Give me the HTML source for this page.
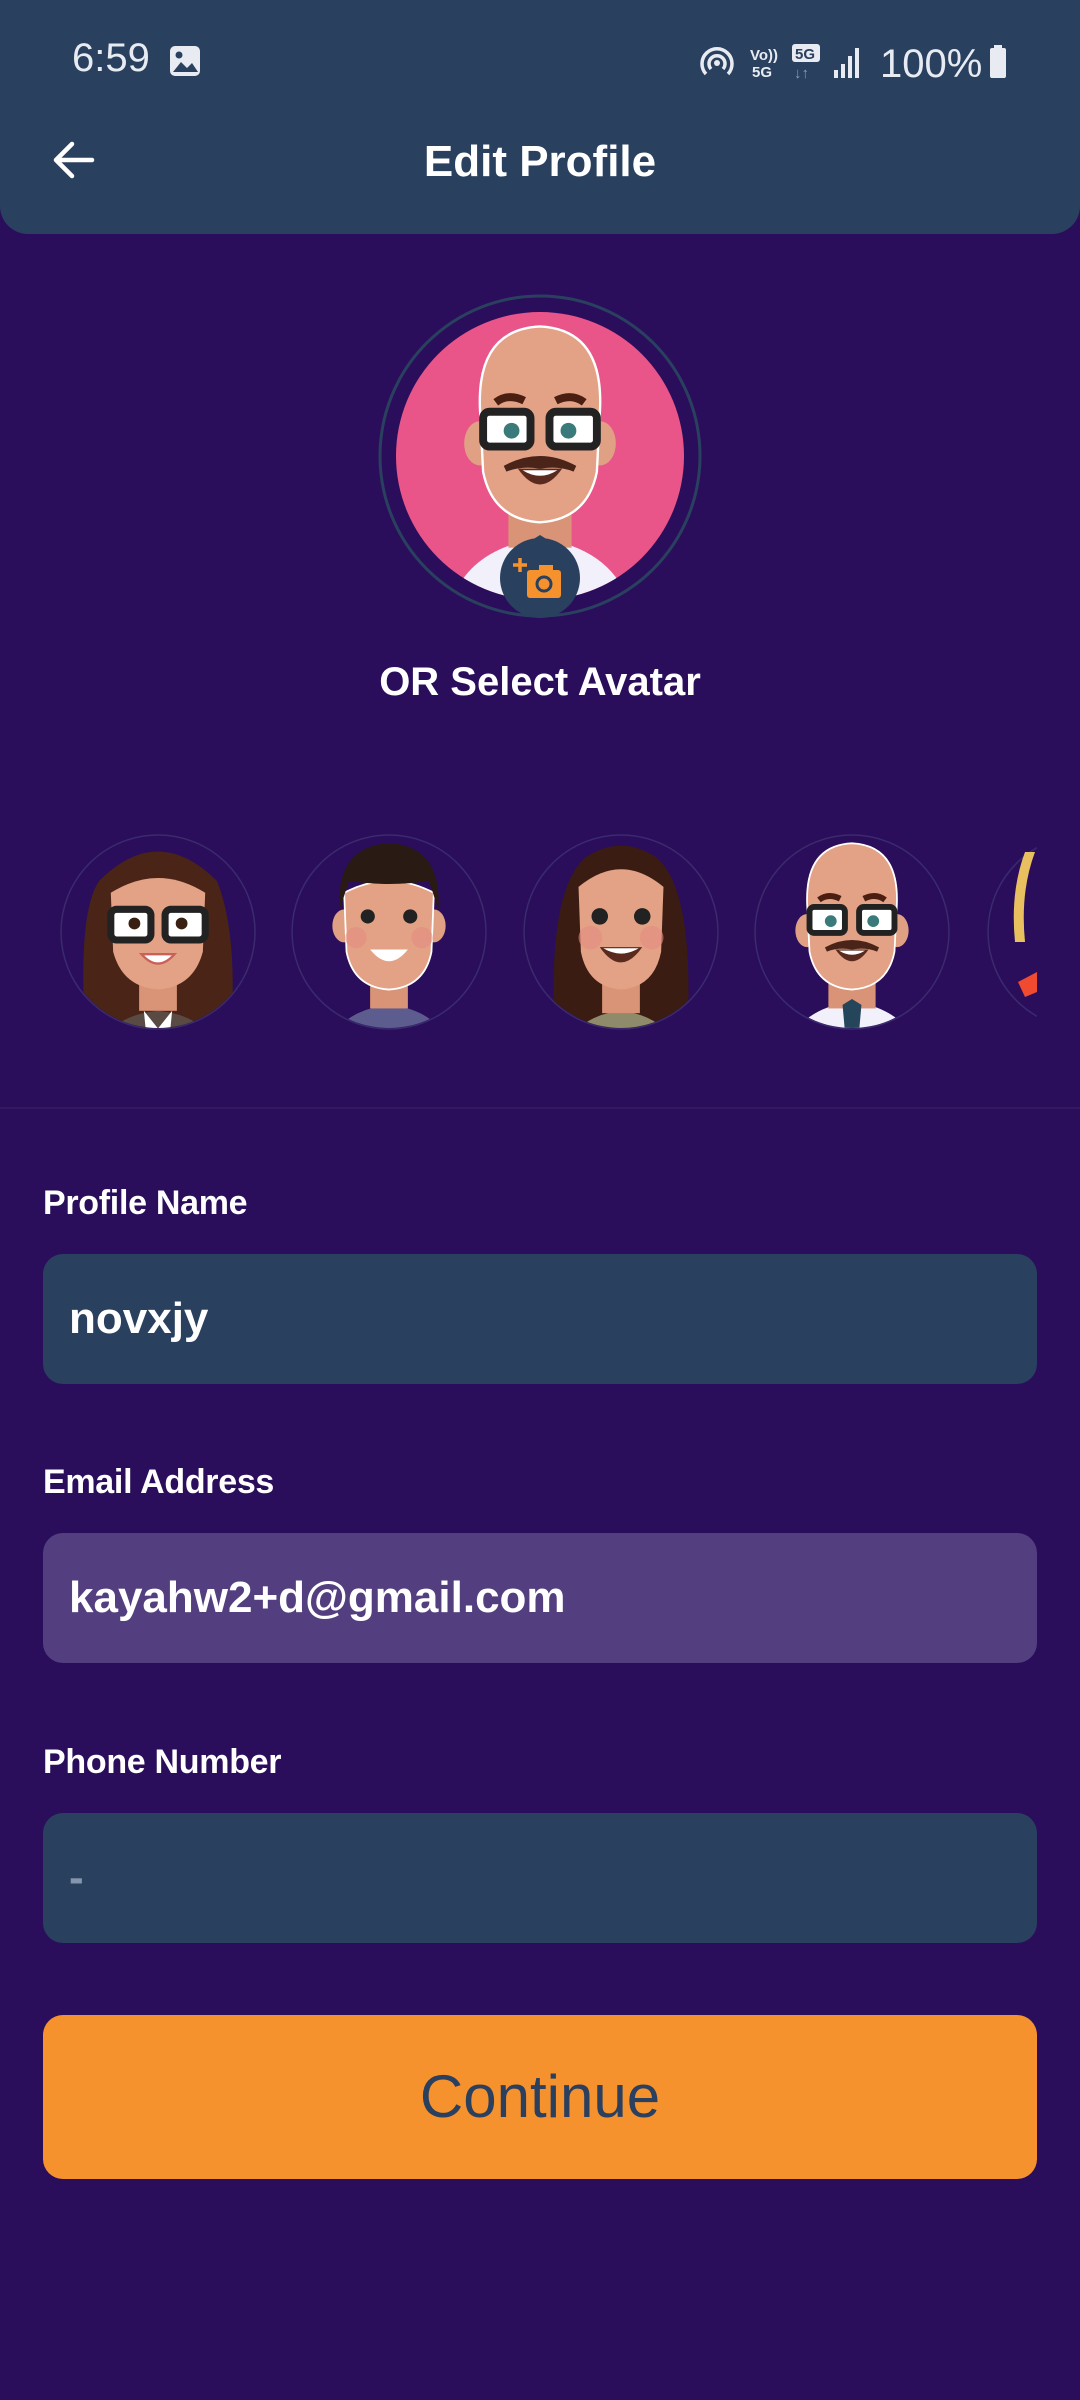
<!DOCTYPE html>
<html><head><meta charset="utf-8"><style>
*{margin:0;padding:0;box-sizing:border-box}
body{width:1080px;height:2400px;background:#2a0e5b;position:relative;overflow:hidden;font-family:"Liberation Sans",sans-serif;color:#fff}
.hdr{position:absolute;left:0;top:0;width:1080px;height:234px;background:#2a405f;border-radius:0 0 28px 28px}
.abs{position:absolute}
.lbl{position:absolute;left:43px;font-size:34px;font-weight:bold;letter-spacing:-0.3px}
.inp{position:absolute;left:43px;width:994px;height:130px;border-radius:20px;background:#29405f;font-size:44px;font-weight:bold;padding-left:26px;line-height:130px}
</style></head><body>
<div class="hdr"></div>
<div class="abs" style="left:72px;top:36px;font-size:40px;color:#e8ecf2">6:59</div>
<svg class="abs" style="left:168px;top:44px" width="34" height="34" viewBox="0 0 34 34"><rect x="2" y="2" width="30" height="30" rx="5" fill="#e8ecf2"/><circle cx="11" cy="11" r="3.5" fill="#2a405f"/><path d="M5 28 L13 18 L19 24 L24 19 L30 28Z" fill="#2a405f"/></svg>
<svg class="abs" style="left:698px;top:42px" width="310" height="40" viewBox="0 0 310 40">
<g fill="none" stroke="#e8ecf2" stroke-width="3.5"><path d="M8 32 A15 15 0 1 1 30 32"/><path d="M13 27 A8 8 0 1 1 25 27"/></g><circle cx="19" cy="21" r="3" fill="#e8ecf2"/>
<text x="52" y="18" font-size="15" font-weight="bold" fill="#e8ecf2" font-family="Liberation Sans">Vo))</text><text x="54" y="35" font-size="15" font-weight="bold" fill="#e8ecf2" font-family="Liberation Sans">5G</text>
<rect x="94" y="2" width="28" height="18" rx="3" fill="#e8ecf2"/><text x="97" y="17" font-size="15" font-weight="bold" fill="#2a405f" font-family="Liberation Sans">5G</text><text x="96" y="36" font-size="15" fill="#8a9ab0" font-family="Liberation Sans">↓↑</text>
<g fill="#e8ecf2"><rect x="136" y="28" width="4" height="8"/><rect x="143" y="22" width="4" height="14"/><rect x="150" y="14" width="4" height="22"/><rect x="157" y="6" width="4" height="30"/></g>
<text x="182" y="35" font-size="40" fill="#e8ecf2" font-family="Liberation Sans">100%</text>
<rect x="292" y="6" width="16" height="30" rx="2" fill="#e8ecf2"/><rect x="296" y="3" width="8" height="4" fill="#e8ecf2"/>
</svg>
<svg class="abs" style="left:50px;top:138px" width="48" height="44" viewBox="0 0 48 44"><path d="M42 22 H6 M22 6 L6 22 L22 38" fill="none" stroke="#fff" stroke-width="4.5" stroke-linecap="round" stroke-linejoin="round"/></svg>
<div class="abs" style="left:0;width:1080px;top:137px;text-align:center;font-size:44px;font-weight:bold">Edit Profile</div>

<svg width="0" height="0" style="position:absolute"><defs>
<g id="bald">
<path d="M40 210 Q45 160 100 152 Q155 160 160 210Z" fill="#f2f0fb"/>
<rect x="80" y="118" width="40" height="40" fill="#d99376"/>
<path d="M92 155 L100 150 L108 155 L104 200 L96 200Z" fill="#24455a"/>
<ellipse cx="62" cy="92" rx="10" ry="14" fill="#e0a084"/><ellipse cx="138" cy="92" rx="10" ry="14" fill="#e0a084"/>
<path d="M62 70 Q60 20 100 18 Q140 20 138 70 L136 110 Q130 140 100 142 Q70 140 64 110Z" fill="#e3a285" stroke="#fff" stroke-width="1.5"/>
<path d="M72 66 Q80 60 90 65 M110 65 Q120 60 128 66" stroke="#4a1f12" stroke-width="5" fill="none"/>
<g fill="#fff" stroke="#222" stroke-width="5"><rect x="64" y="72" width="30" height="22" rx="4"/><rect x="106" y="72" width="30" height="22" rx="4"/></g>
<circle cx="82" cy="84" r="5" fill="#3a7a7a"/><circle cx="118" cy="84" r="5" fill="#3a7a7a"/>
<path d="M78 108 Q100 96 122 108 Q112 104 100 106 Q88 104 78 108Z" fill="#4a2418" stroke="#4a2418" stroke-width="4"/>
<path d="M86 108 Q100 128 114 108Z" fill="#5a2a1e"/><path d="M89 109 Q100 116 111 109Z" fill="#fff"/>
</g>
<g id="woman1">
<path d="M40 200 Q30 80 50 50 Q100 0 150 50 Q170 100 160 200Z" fill="#4a2417"/>
<path d="M45 210 Q50 165 100 160 Q150 165 155 210Z" fill="#5a4a44"/>
<path d="M88 160 L100 175 L112 160 L110 180 L100 185 L90 180Z" fill="#fff"/>
<rect x="84" y="120" width="32" height="40" fill="#d99376"/>
<path d="M60 60 Q100 35 140 60 L138 110 Q130 140 100 142 Q70 140 62 110Z" fill="#e3a285"/>
<g fill="#fff" stroke="#222" stroke-width="6"><rect x="60" y="74" width="34" height="26" rx="5"/><rect x="106" y="74" width="34" height="26" rx="5"/></g>
<circle cx="80" cy="86" r="5" fill="#3a2010"/><circle cx="120" cy="86" r="5" fill="#3a2010"/>
<path d="M86 112 Q100 128 114 112Z" fill="#fff" stroke="#c9605a" stroke-width="2"/>
</g>
<g id="man2">
<path d="M40 210 Q50 160 100 155 Q150 160 160 210Z" fill="#5d5c8e"/>
<rect x="84" y="118" width="32" height="40" fill="#d99376"/>
<ellipse cx="62" cy="88" rx="10" ry="14" fill="#e0a084"/><ellipse cx="138" cy="88" rx="10" ry="14" fill="#e0a084"/>
<path d="M62 60 Q100 40 138 60 L136 110 Q130 140 100 142 Q70 140 64 110Z" fill="#e3a285" stroke="#fff" stroke-width="1.5"/>
<path d="M58 75 Q55 20 100 18 Q145 20 142 75 L134 50 Q100 55 66 50Z" fill="#2a1a14"/>
<ellipse cx="82" cy="80" rx="6" ry="6" fill="#222"/><ellipse cx="118" cy="80" rx="6" ry="6" fill="#222"/>
<circle cx="72" cy="98" r="9" fill="#e58a80" opacity=".6"/><circle cx="128" cy="98" r="9" fill="#e58a80" opacity=".6"/>
<path d="M84 108 Q100 128 116 108Z" fill="#fff"/>
</g>
<g id="woman2">
<path d="M45 200 Q35 60 70 30 Q100 10 130 30 Q165 60 155 200Z" fill="#3b1c12"/>
<path d="M45 210 Q55 165 100 160 Q145 165 155 210Z" fill="#8e8a6a"/>
<rect x="84" y="118" width="32" height="44" fill="#d99376"/>
<path d="M64 55 Q100 25 136 55 L134 110 Q128 140 100 142 Q72 140 66 110Z" fill="#e3a285"/>
<ellipse cx="82" cy="80" rx="7" ry="7" fill="#222"/><ellipse cx="118" cy="80" rx="7" ry="7" fill="#222"/>
<circle cx="74" cy="98" r="10" fill="#e58a80" opacity=".6"/><circle cx="126" cy="98" r="10" fill="#e58a80" opacity=".6"/>
<path d="M82 106 Q100 132 118 106Z" fill="#5a2a1e"/><path d="M85 107 Q100 116 115 107Z" fill="#fff"/>
</g>
</defs></svg>

<svg class="abs" style="left:378px;top:294px" width="324" height="340" viewBox="0 0 324 340">
<circle cx="162" cy="162" r="160" fill="none" stroke="#2a405f" stroke-width="3"/>
<clipPath id="c0"><circle cx="162" cy="162" r="144"/></clipPath>
<circle cx="162" cy="162" r="144" fill="#ea5589"/>
<g clip-path="url(#c0)"><use href="#bald" transform="translate(4 4) scale(1.58)"/></g>
<circle cx="162" cy="284" r="40" fill="#2a405f"/>
<rect x="149" y="276" width="34" height="28" rx="3" fill="#f6922e"/><rect x="161" y="271" width="14" height="6" fill="#f6922e"/>
<circle cx="166" cy="290" r="7" fill="none" stroke="#2a405f" stroke-width="3"/>
<path d="M142 264 v14 M135 271 h14" stroke="#f6922e" stroke-width="3.5"/>
</svg>
<div class="abs" style="left:0;width:1080px;top:660px;text-align:center;font-size:40px;font-weight:bold">OR Select Avatar</div>

<svg class="abs" style="left:0;top:830px" width="1037" height="200" viewBox="0 0 1037 200">
<defs><clipPath id="ca"><circle cx="100" cy="100" r="96"/></clipPath></defs>
<g transform="translate(58 2)"><circle cx="100" cy="100" r="97" fill="none" stroke="#3a2a6e" stroke-width="1.5"/><g clip-path="url(#ca)"><use href="#woman1" transform="translate(-18 -10) scale(1.18)"/></g></g>
<g transform="translate(289 2)"><circle cx="100" cy="100" r="97" fill="none" stroke="#3a2a6e" stroke-width="1.5"/><g clip-path="url(#ca)"><use href="#man2" transform="translate(-18 -10) scale(1.18)"/></g></g>
<g transform="translate(521 2)"><circle cx="100" cy="100" r="97" fill="none" stroke="#3a2a6e" stroke-width="1.5"/><g clip-path="url(#ca)"><use href="#woman2" transform="translate(-18 -10) scale(1.18)"/></g></g>
<g transform="translate(752 2)"><circle cx="100" cy="100" r="97" fill="none" stroke="#3a2a6e" stroke-width="1.5"/><g clip-path="url(#ca)"><use href="#bald" transform="translate(-18 -10) scale(1.18)"/></g></g>
<g transform="translate(985 2)"><circle cx="100" cy="100" r="97" fill="none" stroke="#3a2a6e" stroke-width="1.5"/><path d="M40 20 Q25 60 30 110 L40 110 Q35 60 50 20Z" fill="#e8c060"/><path d="M33 150 L52 140 L52 160 L40 165Z" fill="#f04a30"/></g>
</svg>
<div class="abs" style="left:0;top:1107px;width:1080px;height:2px;background:#33195f"></div>

<div class="lbl" style="top:1184px">Profile Name</div>
<div class="inp" style="top:1254px">novxjy</div>
<div class="lbl" style="top:1463px">Email Address</div>
<div class="inp" style="top:1533px;background:#533f7f">kayahw2+d@gmail.com</div>
<div class="lbl" style="top:1743px">Phone Number</div>
<div class="inp" style="top:1813px;color:#8595ab">-</div>
<div class="abs" style="left:43px;top:2015px;width:994px;height:164px;border-radius:20px;background:#f6922e;color:#2b3f5e;font-size:60px;text-align:center;line-height:164px">Continue</div>
</body></html>
